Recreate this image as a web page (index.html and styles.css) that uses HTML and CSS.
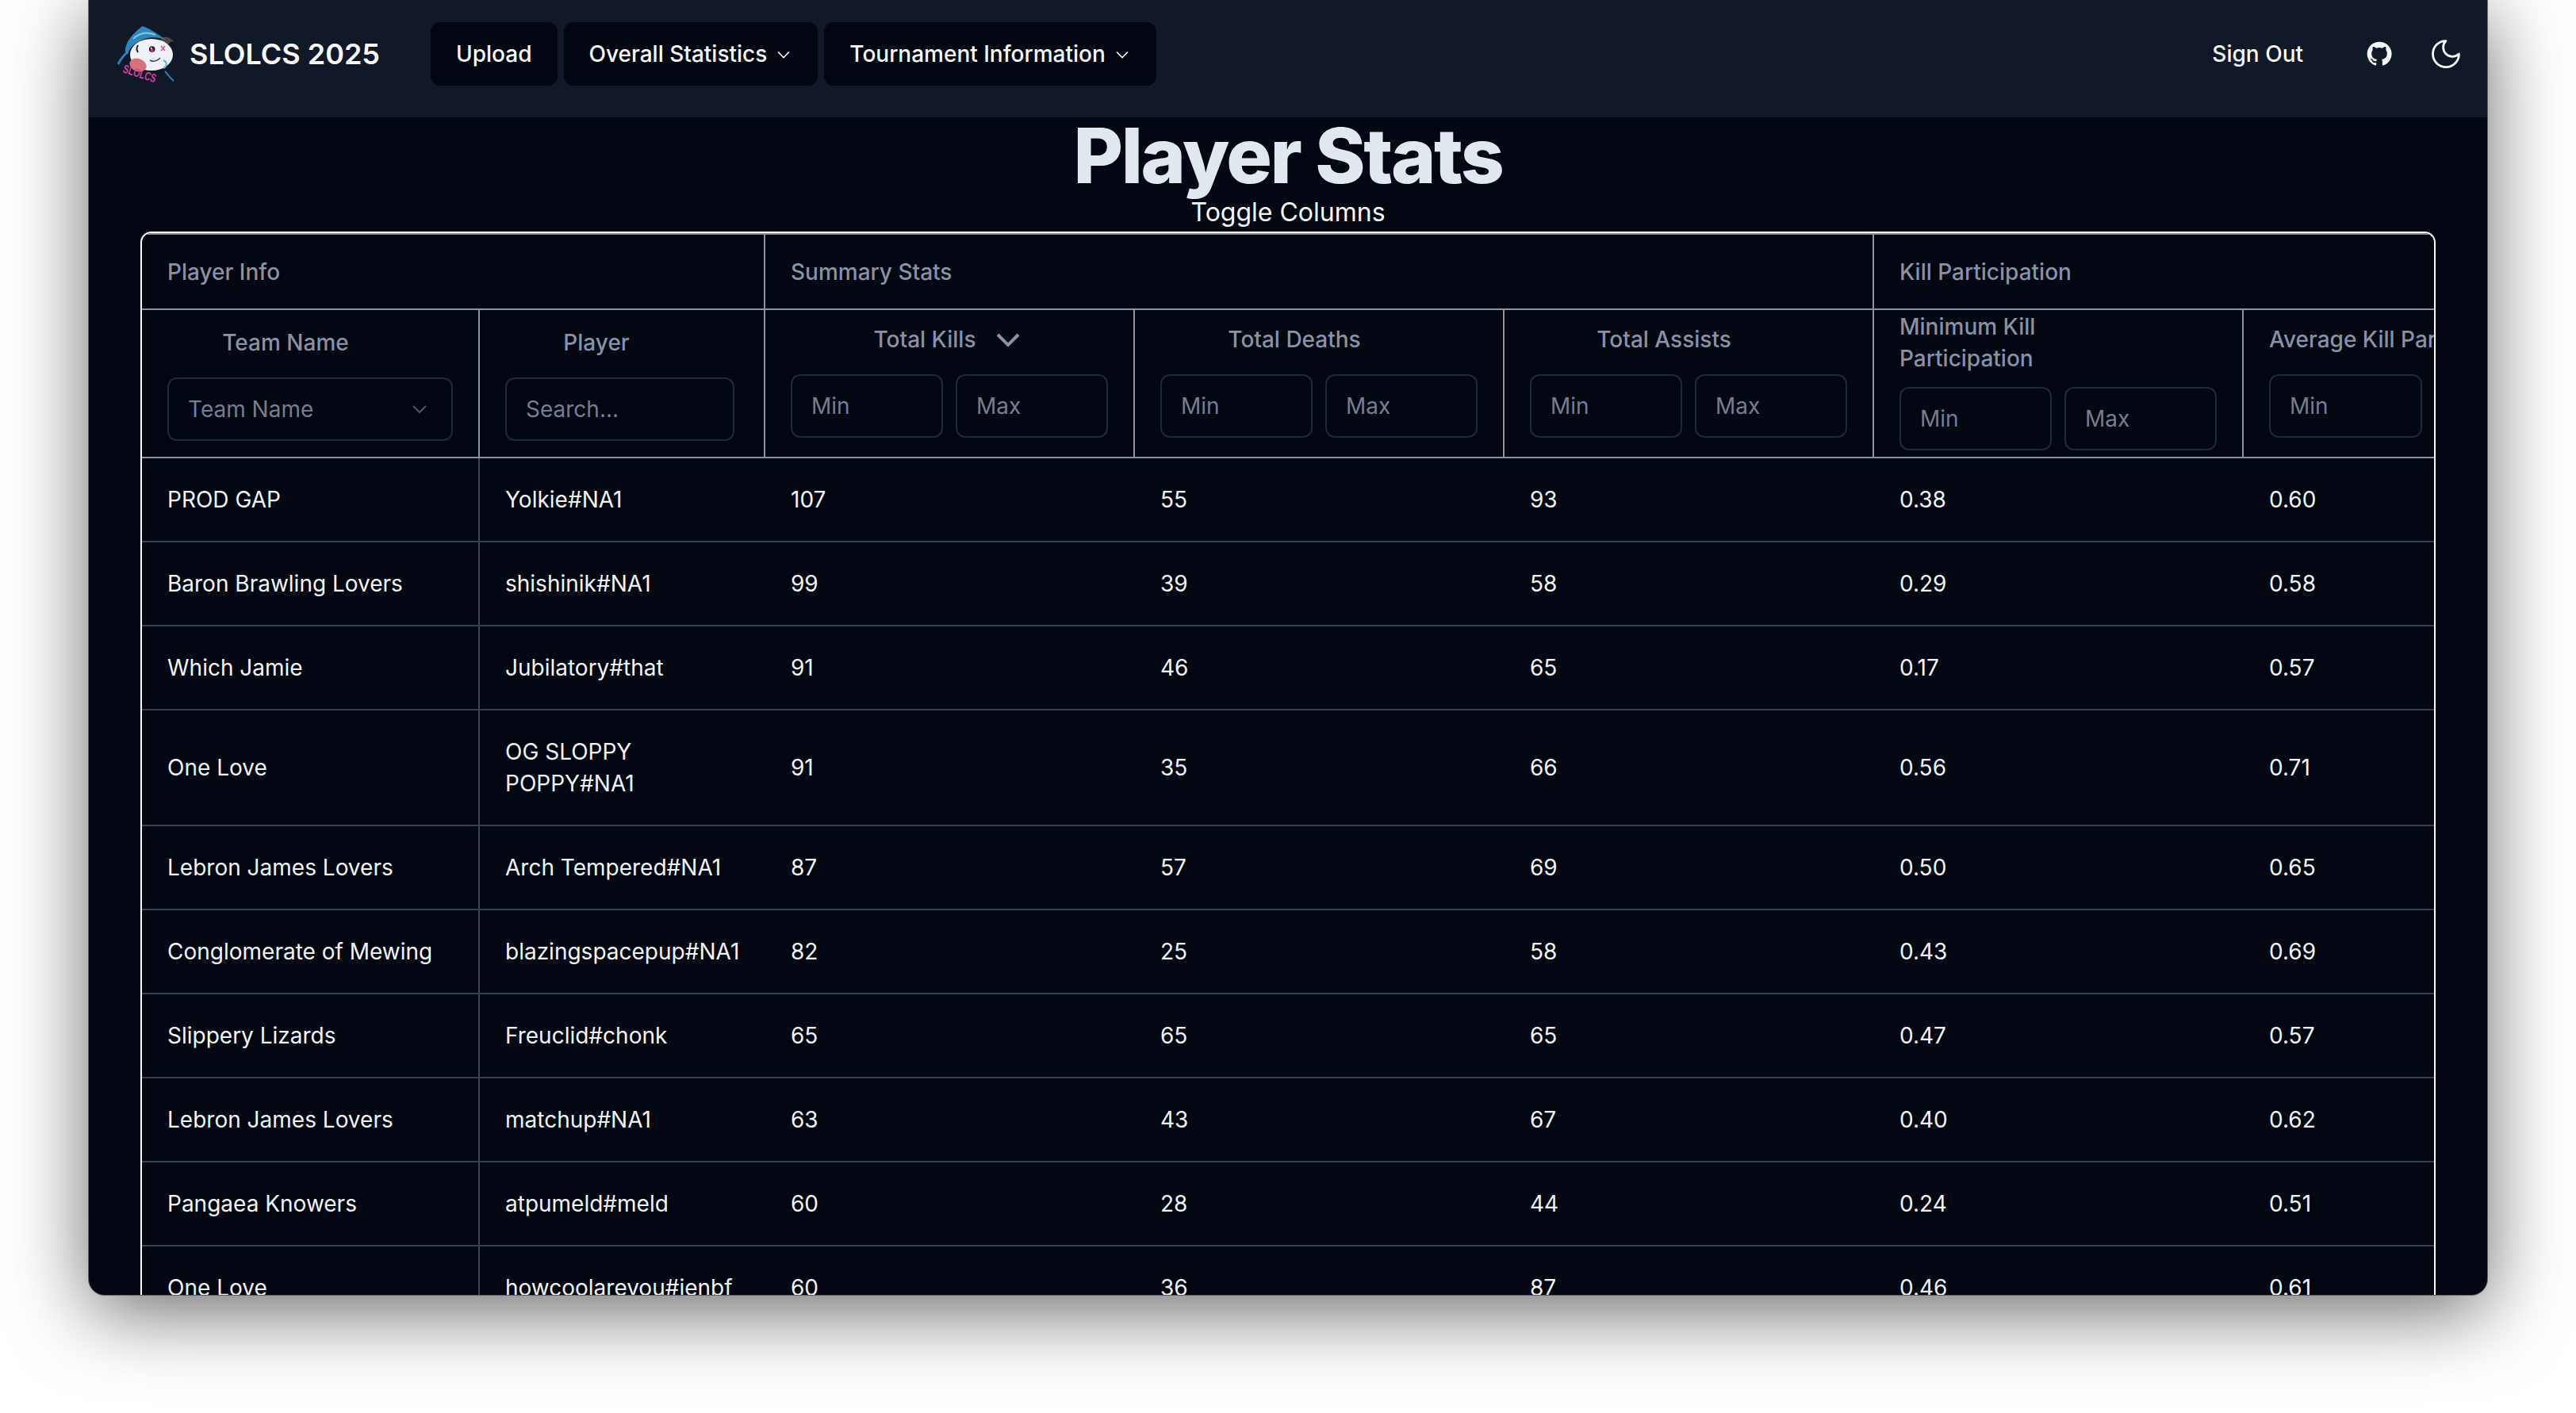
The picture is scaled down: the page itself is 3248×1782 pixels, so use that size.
FILE: index.html
```html
<!DOCTYPE html>
<html lang="en">
<head>
  <meta charset="UTF-8" />
  <title>Player Stats</title>
  <link rel="stylesheet" href="styles.css">
</head>
<body>
<div class="window">
  <header class="topbar">
    <div class="brand">
      <svg class="logo" viewBox="0 0 74 72" width="74" height="72">
        <path d="M15 33 C10 38 6 42 3 49" fill="none" stroke="#2f7fb5" stroke-width="3"/>
        <path d="M62 58 C66 62 68 66 73 70" fill="none" stroke="#2f7fb5" stroke-width="2"/>
        <path d="M56 22 C56 16 60 13 66 15 C69 16 72 19 74 21 C70 19 67 21 66 25 C63 27 58 26 56 22 Z" fill="#4c4644"/>
        <ellipse cx="45" cy="37" rx="27" ry="20" fill="#eef1f5"/>
        <path d="M11.700 33.300 C11.700 21.700 20 11.700 33.300 1 C41.700 3.300 51.700 10 63.300 18.300 C50 13.300 38.300 15 30 20 C23.300 23.300 16.700 28.300 15 36.700 Z" fill="#2f86bd"/>
        <path d="M22 17 C30 9 40 8 50 12" fill="none" stroke="#7cc4e6" stroke-width="2"/>
        <path d="M28 25 C26 28 26 31 28 34" fill="none" stroke="#20242c" stroke-width="2"/>
        <circle cx="45.700" cy="30" r="3.800" fill="#2c1028"/>
        <circle cx="45.700" cy="31" r="2" fill="#d0408a"/>
        <circle cx="44.700" cy="28.800" r="1" fill="#fff"/>
        <path d="M57 26 L62 32 M62 26 L57 32" stroke="#e0559c" stroke-width="1.500"/>
        <path d="M43 44 C47 46 52 45 56 41" fill="none" stroke="#3b3f48" stroke-width="1.500"/>
        <ellipse cx="28" cy="50" rx="11" ry="8" transform="rotate(20 28 50)" fill="#d8737e"/>
        <path d="M60 44 C65 46 65 52 60 54" fill="none" stroke="#6fa8cc" stroke-width="2"/>
        <text class="logo-text" x="8" y="59" textLength="43" lengthAdjust="spacingAndGlyphs" transform="rotate(18 8 59)">SLOLCS</text>
      </svg>
      <span class="brand-name">SLOLCS 2025</span>
    </div>
    <nav class="nav">
      <a class="nav-btn">Upload</a>
      <a class="nav-btn">Overall Statistics
        <svg class="nav-chev" viewBox="0 0 24 24"><path d="M6 9l6 6 6-6"/></svg>
      </a>
      <a class="nav-btn">Tournament Information
        <svg class="nav-chev" viewBox="0 0 24 24"><path d="M6 9l6 6 6-6"/></svg>
      </a>
    </nav>
    <div class="actions">
      <a class="sign-out">Sign Out</a>
      <svg class="gh" viewBox="0 0 24 24" width="32" height="32"><path d="M12 .5a11.500 11.500 0 0 0-3.640 22.410c.58.110.79-.250.790-.550v-2.100c-3.200.700-3.880-1.360-3.880-1.360-.520-1.330-1.280-1.690-1.280-1.690-1.040-.710.080-.700.080-.700 1.160.080 1.770 1.190 1.770 1.190 1.030 1.760 2.690 1.250 3.350.960.100-.750.400-1.250.730-1.540-2.560-.290-5.250-1.280-5.250-5.690 0-1.260.450-2.290 1.180-3.090-.120-.290-.510-1.460.110-3.050 0 0 .970-.310 3.170 1.180a11 11 0 0 1 5.770 0c2.200-1.490 3.160-1.180 3.160-1.180.630 1.590.230 2.760.120 3.050.740.800 1.180 1.830 1.180 3.090 0 4.420-2.690 5.390-5.260 5.680.410.360.780 1.060.780 2.130v3.160c0 .310.210.670.800.550A11.500 11.500 0 0 0 12 .5Z" fill="#f8fafc"/></svg>
      <svg class="moon" viewBox="0 0 24 24" width="44" height="44"><path d="M12 3a6 6 0 0 0 9 9 9 9 0 1 1-9-9Z"/></svg>
    </div>
  </header>

  <main class="content">
    <h1 class="title">Player Stats</h1>
    <div class="toggle">Toggle Columns</div>

    <div class="table-wrap">
      <table class="stats">
        <colgroup>
          <col class="col-team"><col class="col-player">
          <col class="col-num"><col class="col-num"><col class="col-num"><col class="col-num"><col class="col-num">
        </colgroup>
        <thead>
          <tr class="groups">
            <th colspan="2">Player Info</th>
            <th colspan="3">Summary Stats</th>
            <th colspan="2" class="last">Kill Participation</th>
          </tr>
          <tr class="filters">
            <th class="low">
              <div class="head-stack">
                <div class="head-label">Team Name<span class="sort-slot"></span></div>
                <div class="select">Team Name
                  <svg class="select-chev" viewBox="0 0 24 24"><path d="M6 9l6 6 6-6"/></svg>
                </div>
              </div>
            </th>
            <th class="low">
              <div class="head-stack">
                <div class="head-label search-label">Player<span class="sort-slot"></span></div>
                <div class="input search">Search...</div>
              </div>
            </th>
            <th>
              <div class="head-stack">
                <div class="head-label">Total Kills<span class="sort-slot"><svg class="sort-chev" viewBox="0 0 32 20"><path d="M3 3l13 13L29 3"/></svg></span></div>
                <div class="range"><div class="input">Min</div><div class="input">Max</div></div>
              </div>
            </th>
            <th>
              <div class="head-stack">
                <div class="head-label">Total Deaths<span class="sort-slot"></span></div>
                <div class="range"><div class="input">Min</div><div class="input">Max</div></div>
              </div>
            </th>
            <th>
              <div class="head-stack">
                <div class="head-label">Total Assists<span class="sort-slot"></span></div>
                <div class="range"><div class="input">Min</div><div class="input">Max</div></div>
              </div>
            </th>
            <th>
              <div class="head-stack tight">
                <div class="head-label left">Minimum Kill<br>Participation</div>
                <div class="range"><div class="input">Min</div><div class="input">Max</div></div>
              </div>
            </th>
            <th class="last">
              <div class="head-stack">
                <div class="head-label left nowrap">Average Kill Participation</div>
                <div class="range"><div class="input">Min</div><div class="input">Max</div></div>
              </div>
            </th>
          </tr>
        </thead>
        <tbody>
          <tr><td>PROD GAP</td><td>Yolkie#NA1</td><td>107</td><td>55</td><td>93</td><td>0.38</td><td>0.60</td></tr>
          <tr><td>Baron Brawling Lovers</td><td>shishinik#NA1</td><td>99</td><td>39</td><td>58</td><td>0.29</td><td>0.58</td></tr>
          <tr><td>Which Jamie</td><td>Jubilatory#that</td><td>91</td><td>46</td><td>65</td><td>0.17</td><td>0.57</td></tr>
          <tr><td>One Love</td><td>OG SLOPPY<br>POPPY#NA1</td><td>91</td><td>35</td><td>66</td><td>0.56</td><td>0.71</td></tr>
          <tr><td>Lebron James Lovers</td><td>Arch Tempered#NA1</td><td>87</td><td>57</td><td>69</td><td>0.50</td><td>0.65</td></tr>
          <tr><td>Conglomerate of Mewing</td><td>blazingspacepup#NA1</td><td>82</td><td>25</td><td>58</td><td>0.43</td><td>0.69</td></tr>
          <tr><td>Slippery Lizards</td><td>Freuclid#chonk</td><td>65</td><td>65</td><td>65</td><td>0.47</td><td>0.57</td></tr>
          <tr><td>Lebron James Lovers</td><td>matchup#NA1</td><td>63</td><td>43</td><td>67</td><td>0.40</td><td>0.62</td></tr>
          <tr><td>Pangaea Knowers</td><td>atpumeld#meld</td><td>60</td><td>28</td><td>44</td><td>0.24</td><td>0.51</td></tr>
          <tr><td>One Love</td><td>howcoolareyou#jenbf</td><td>60</td><td>36</td><td>87</td><td>0.46</td><td>0.61</td></tr>
        </tbody>
      </table>
    </div>
  </main>
</div>
</body>
</html>
```

FILE: styles.css
```css
html, body {
  margin: 0;
  height: 1782px;
  overflow: hidden;
  background: #fff;
}
body {
  font-family: Inter, "Liberation Sans", sans-serif;
  color: #f8fafc;
}
.window {
  width: 3024px;
  height: 1633px;
  margin-left: 112px;
  background: #030711;
  border-radius: 0 0 20px 20px;
  box-shadow: 0 0 0 1px rgb(60 62 72 / 0.7), 0 20px 100px rgb(0 0 0 / 0.6);
  overflow: hidden;
}

/* top bar */
.topbar {
  height: 148px;
  box-sizing: border-box;
  background: #111827;
  padding: 28px 30px 40px 34px;
  display: flex;
  align-items: center;
}
.brand {
  display: flex;
  align-items: center;
  gap: 19px;
  margin-right: 64px;
}
.logo {
  display: block;
  margin-top: -12px;
  margin-bottom: -12px;
  overflow: visible;
}
.logo-text {
  font-family: "Liberation Sans", sans-serif;
  font-size: 15px;
  font-weight: 700;
  fill: #d23fa6;
}
.brand-name {
  font-size: 36px;
  font-weight: 600;
}
.nav {
  display: flex;
  gap: 8px;
}
.nav-btn {
  height: 80px;
  padding: 0 32px;
  display: flex;
  align-items: center;
  background: #030711;
  border-radius: 12px;
  font-size: 28px;
  font-weight: 500;
}
.nav-chev {
  width: 28px;
  height: 28px;
  margin: 2px -3px 0 7px;
  fill: none;
  stroke: #f8fafc;
  stroke-width: 1.4;
}
.actions {
  margin-left: auto;
  display: flex;
  align-items: center;
}
.sign-out {
  font-size: 28px;
  font-weight: 500;
  margin-right: 80px;
}
.moon {
  margin-left: 46px;
  fill: none;
  stroke: #f8fafc;
  stroke-width: 1.5;
  stroke-linecap: round;
  stroke-linejoin: round;
}

/* page heading */
.content {
  padding: 0 65px;
}
.title {
  margin: 0;
  text-align: center;
  font-size: 96px;
  line-height: 96px;
  font-weight: 800;
  letter-spacing: -2.35px;
  color: #e2e8f0;
}
.toggle {
  text-align: center;
  font-size: 32px;
  line-height: 48px;
}

/* table */
.table-wrap {
  border: 2px solid #fff;
  border-bottom: 0;
  border-radius: 14px 14px 0 0;
  overflow: hidden;
  height: 1400px;
}
.stats {
  table-layout: fixed;
  width: 3038px;
  border-collapse: separate;
  border-spacing: 0;
  font-size: 28px;
  line-height: 40px;
}
.col-team { width: 426px; }
.col-player { width: 360px; }
.col-num { width: 466px; }

.stats th {
  font-weight: 500;
  text-align: left;
  color: #8792a6;
  border-right: 2px solid #8792a6;
  border-bottom: 2px solid #8792a6;
  overflow: hidden;
}
.stats th.last {
  border-right: 0;
}
.groups th {
  height: 97px;
  padding: 0 32px;
  box-sizing: border-box;
  border-top: 2px solid #8792a6;
}
.filters th {
  height: 187px;
  box-sizing: border-box;
  padding: 0 32px 7px;
  vertical-align: middle;
}
.filters th.low {
  padding-top: 8px;
}
.head-stack {
  display: flex;
  flex-direction: column;
  gap: 24px;
}
.head-stack.tight {
  gap: 16px;
}
.head-label {
  display: flex;
  justify-content: center;
  align-items: center;
  gap: 20px;
  height: 40px;
}
.head-label.left {
  display: block;
  height: auto;
}
.nowrap {
  white-space: nowrap;
}
.sort-slot {
  width: 42px;
  height: 40px;
  display: flex;
  align-items: center;
  justify-content: center;
}
.sort-chev {
  width: 32px;
  height: 20px;
  margin-top: 2px;
  fill: none;
  stroke: #8792a6;
  stroke-width: 4;
}
.range {
  display: flex;
  gap: 16px;
}
.input, .select {
  height: 80px;
  box-sizing: border-box;
  padding: 0 24px;
  display: flex;
  align-items: center;
  border: 2px solid #1f2937;
  border-radius: 12px;
  color: #737e93;
  font-weight: 400;
}
.range .input {
  flex: 1;
}
.search {
  width: 289px;
}
.search-label {
  width: 292px;
}
.select {
  justify-content: space-between;
}
.select-chev {
  width: 32px;
  height: 32px;
  fill: none;
  stroke: #4d566a;
  stroke-width: 1.5;
}
.stats td {
  padding: 32px;
  border-bottom: 2px solid #374151;
  color: #f1f5f9;
  white-space: nowrap;
}
.stats td:first-child {
  border-right: 2px solid #3d434f;
  box-shadow: -4px 0 6px -3px rgb(255 255 255 / 0.1);
}
.stats tr {
  vertical-align: middle;
}
```
